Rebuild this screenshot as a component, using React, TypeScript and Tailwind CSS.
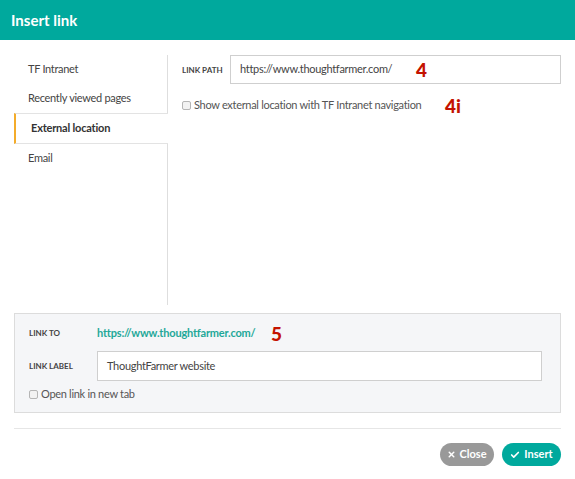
import { Check, X } from 'lucide-react';

const font = { fontFamily: 'Lato, "Noto Sans", sans-serif' };

function NavItem({ label, active }: { label: string; active?: boolean }) {
  if (active) {
    return (
      <div className="h-[31px] flex items-center pl-[15px] border-l-2 border-[#f4ac2b] border-t border-b border-t-[#e3e3e3] border-b-[#e3e3e3] text-[11px] tracking-[-0.2px] font-bold text-[#333]">
        {label}
      </div>
    );
  }
  return (
    <div className="h-[29px] flex items-center pl-[14px] border-r border-[#dedede] text-[11px] tracking-[-0.3px] text-[#444]">
      {label}
    </div>
  );
}

function Checkbox() {
  return <span className="w-[9px] h-[9px] border border-[#b5b5b5] bg-[#f2f2f2] rounded-[2px] shrink-0" />;
}

export default function App() {
  return (
    <div className="w-[575px] h-[479px] bg-white" style={font}>
      <div className="h-[40px] bg-[#00a99d] flex items-center px-[11px]">
        <h1 className="text-white text-[15px] font-bold">Insert link</h1>
      </div>

      <div className="px-[14px]">
        <div className="flex h-[250px] mt-[15px]">
          <div className="w-[154px] flex flex-col">
            <NavItem label="TF Intranet" />
            <NavItem label="Recently viewed pages" />
            <NavItem label="External location" active />
            <NavItem label="Email" />
            <div className="flex-1 border-r border-[#dedede]" />
          </div>

          <div className="flex-1 pl-[14px]">
            <div className="flex items-center h-[29px]">
              <span className="w-[48px] text-[8px] font-bold text-[#444] uppercase whitespace-nowrap">Link path</span>
              <div className="w-[331px] h-[29px] border border-[#cfcfcf] flex items-center pl-[9px] text-[11px] tracking-[-0.3px] text-[#444]">
                <span className="w-[176px] whitespace-nowrap">https://www.thoughtfarmer.com/</span>
                <span className="text-[#c41200] text-[19px] font-black leading-none tracking-normal">4</span>
              </div>
            </div>
            <div className="flex items-center gap-[3px] mt-[12px] text-[11px] tracking-[-0.3px] text-[#555]">
              <Checkbox />
              <span className="w-[248px] whitespace-nowrap">Show external location with TF Intranet navigation</span>
              <span className="text-[#c41200] text-[19px] font-black leading-none tracking-normal">4i</span>
            </div>
          </div>
        </div>

        <div className="mt-[8px] h-[100px] bg-[#f5f6f8] border border-[#dcdcdc] pl-[14px] pt-[10px]">
          <div className="flex items-center h-[18px]">
            <span className="w-[68px] text-[8px] font-bold text-[#444] uppercase">Link to</span>
            <span className="w-[174px] whitespace-nowrap text-[11px] tracking-[-0.2px] font-bold text-[#1fa898]">https://www.thoughtfarmer.com/</span>
            <span className="text-[#c41200] text-[19px] font-black leading-none">5</span>
          </div>
          <div className="flex items-center mt-[9px]">
            <span className="w-[68px] text-[8px] font-bold text-[#444] uppercase whitespace-nowrap">Link label</span>
            <div className="w-[445px] h-[30px] bg-white border border-[#cfcfcf] flex items-center pl-[9px] text-[11px] tracking-[-0.3px] text-[#444]">
              ThoughtFarmer website
            </div>
          </div>
          <div className="flex items-center gap-[3px] mt-[5px] text-[11px] tracking-[-0.3px] text-[#555]">
            <Checkbox />
            <span>Open link in new tab</span>
          </div>
        </div>

        <div className="mt-[15px] border-t border-[#e6e6e6]" />

        <div className="flex justify-end gap-[8px] mt-[14px]">
          <button className="h-[23px] w-[54px] rounded-full bg-[#999999] text-white text-[11px] font-bold flex items-center justify-center gap-[3px]">
            <X size={9} strokeWidth={4} />
            Close
          </button>
          <button className="h-[23px] w-[59px] rounded-full bg-[#00a99d] text-white text-[11px] font-bold flex items-center justify-center gap-[4px]">
            <Check size={10} strokeWidth={4} />
            Insert
          </button>
        </div>
      </div>
    </div>
  );
}
